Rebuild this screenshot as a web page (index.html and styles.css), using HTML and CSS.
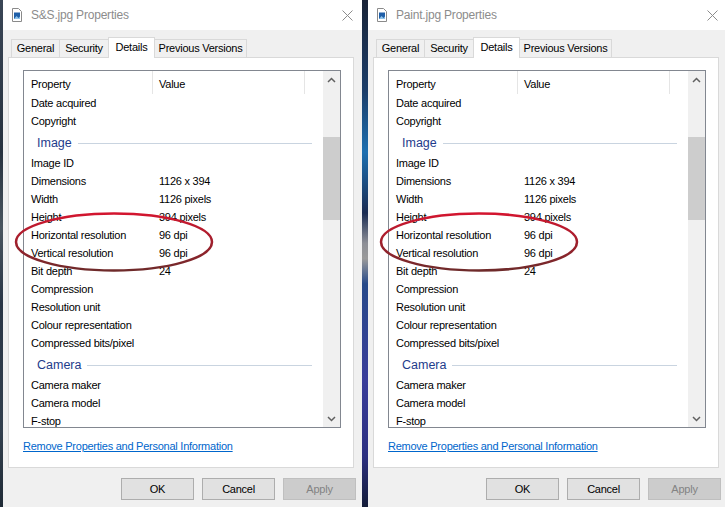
FILE: index.html
```html
<!DOCTYPE html>
<html lang="en">
<head>
    <meta charset="UTF-8">
    <title>Properties</title>
    <link rel="stylesheet" href="styles.css">
</head>
<body>
    <div class="desk desk-edge"></div>

    <div class="dialog">
        <div class="titlebar">
            <svg class="file-icon" width="10" height="14" viewBox="0 0 10 14"><path d="M0.5 0.5h6l3 3v10h-9z" fill="#fff" stroke="#8a8a8a"/><rect x="2" y="4.5" width="6" height="6.5" fill="#1f5fa8"/><path d="M2 11l2.5-3 2 2 1.5-1.5v2.5z" fill="#8fc3ea"/></svg>
            <span class="title">S&amp;S.jpg Properties</span>
            <svg class="close" width="11" height="11" viewBox="0 0 11 11"><path d="M0.5 0.5l10 10M10.5 0.5l-10 10" stroke="#8c8c8c" stroke-width="1"/></svg>
        </div>
        <div class="tabs">
            <span class="tab tab-general">General</span>
            <span class="tab tab-security">Security</span>
            <span class="tab tab-details active">Details</span>
            <span class="tab tab-prev">Previous Versions</span>
        </div>
        <div class="panel">
            <div class="list">
                <div class="list-body">
                    <div class="head"><span class="c-name">Property</span><span class="c-value">Value</span><span class="c-rest"></span></div>
                    <div class="row"><span class="c-name">Date acquired</span></div>
                    <div class="row"><span class="c-name">Copyright</span></div>
                    <div class="group">Image</div>
                    <div class="row"><span class="c-name">Image ID</span></div>
                    <div class="row"><span class="c-name">Dimensions</span><span class="c-value">1126 x 394</span></div>
                    <div class="row"><span class="c-name">Width</span><span class="c-value">1126 pixels</span></div>
                    <div class="row"><span class="c-name">Height</span><span class="c-value">394 pixels</span></div>
                    <div class="row"><span class="c-name">Horizontal resolution</span><span class="c-value">96 dpi</span></div>
                    <div class="row"><span class="c-name">Vertical resolution</span><span class="c-value">96 dpi</span></div>
                    <div class="row"><span class="c-name">Bit depth</span><span class="c-value">24</span></div>
                    <div class="row"><span class="c-name">Compression</span></div>
                    <div class="row"><span class="c-name">Resolution unit</span></div>
                    <div class="row"><span class="c-name">Colour representation</span></div>
                    <div class="row"><span class="c-name">Compressed bits/pixel</span></div>
                    <div class="group">Camera</div>
                    <div class="row"><span class="c-name">Camera maker</span></div>
                    <div class="row"><span class="c-name">Camera model</span></div>
                    <div class="row"><span class="c-name">F-stop</span></div>
                </div>
                <div class="scroll">
                    <div class="sb-btn"><svg width="9" height="6" viewBox="0 0 9 6"><path d="M1 5l3.5-3.5L8 5" fill="none" stroke="#606060" stroke-width="1.5"/></svg></div>
                    <div class="sb-thumb"></div>
                    <div class="sb-btn"><svg width="9" height="6" viewBox="0 0 9 6"><path d="M1 1l3.5 3.5L8 1" fill="none" stroke="#606060" stroke-width="1.5"/></svg></div>
                </div>
            </div>
            <a class="link" href="#">Remove Properties and Personal Information</a>
        </div>
        <div class="buttons">
            <span class="btn">OK</span>
            <span class="btn">Cancel</span>
            <span class="btn btn-disabled">Apply</span>
        </div>
        <svg class="mark" width="204" height="66" viewBox="0 0 204 66">
            <defs><linearGradient id="ink1" x1="0" y1="0" x2="0" y2="1"><stop offset="0" stop-color="#d3152f"/><stop offset="1" stop-color="#6e2a2a"/></linearGradient></defs>
            <ellipse cx="102" cy="33" rx="98" ry="28.5" fill="none" stroke="url(#ink1)" stroke-width="2.5"/>
        </svg>
    </div>

    <div class="desk desk-gap"></div>

    <div class="dialog">
        <div class="titlebar">
            <svg class="file-icon" width="10" height="14" viewBox="0 0 10 14"><path d="M0.5 0.5h6l3 3v10h-9z" fill="#fff" stroke="#8a8a8a"/><rect x="2" y="4.5" width="6" height="6.5" fill="#1f5fa8"/><path d="M2 11l2.5-3 2 2 1.5-1.5v2.5z" fill="#8fc3ea"/></svg>
            <span class="title">Paint.jpg Properties</span>
            <svg class="close" width="11" height="11" viewBox="0 0 11 11"><path d="M0.5 0.5l10 10M10.5 0.5l-10 10" stroke="#8c8c8c" stroke-width="1"/></svg>
        </div>
        <div class="tabs">
            <span class="tab tab-general">General</span>
            <span class="tab tab-security">Security</span>
            <span class="tab tab-details active">Details</span>
            <span class="tab tab-prev">Previous Versions</span>
        </div>
        <div class="panel">
            <div class="list">
                <div class="list-body">
                    <div class="head"><span class="c-name">Property</span><span class="c-value">Value</span><span class="c-rest"></span></div>
                    <div class="row"><span class="c-name">Date acquired</span></div>
                    <div class="row"><span class="c-name">Copyright</span></div>
                    <div class="group">Image</div>
                    <div class="row"><span class="c-name">Image ID</span></div>
                    <div class="row"><span class="c-name">Dimensions</span><span class="c-value">1126 x 394</span></div>
                    <div class="row"><span class="c-name">Width</span><span class="c-value">1126 pixels</span></div>
                    <div class="row"><span class="c-name">Height</span><span class="c-value">394 pixels</span></div>
                    <div class="row"><span class="c-name">Horizontal resolution</span><span class="c-value">96 dpi</span></div>
                    <div class="row"><span class="c-name">Vertical resolution</span><span class="c-value">96 dpi</span></div>
                    <div class="row"><span class="c-name">Bit depth</span><span class="c-value">24</span></div>
                    <div class="row"><span class="c-name">Compression</span></div>
                    <div class="row"><span class="c-name">Resolution unit</span></div>
                    <div class="row"><span class="c-name">Colour representation</span></div>
                    <div class="row"><span class="c-name">Compressed bits/pixel</span></div>
                    <div class="group">Camera</div>
                    <div class="row"><span class="c-name">Camera maker</span></div>
                    <div class="row"><span class="c-name">Camera model</span></div>
                    <div class="row"><span class="c-name">F-stop</span></div>
                </div>
                <div class="scroll">
                    <div class="sb-btn"><svg width="9" height="6" viewBox="0 0 9 6"><path d="M1 5l3.5-3.5L8 5" fill="none" stroke="#606060" stroke-width="1.5"/></svg></div>
                    <div class="sb-thumb"></div>
                    <div class="sb-btn"><svg width="9" height="6" viewBox="0 0 9 6"><path d="M1 1l3.5 3.5L8 1" fill="none" stroke="#606060" stroke-width="1.5"/></svg></div>
                </div>
            </div>
            <a class="link" href="#">Remove Properties and Personal Information</a>
        </div>
        <div class="buttons">
            <span class="btn">OK</span>
            <span class="btn">Cancel</span>
            <span class="btn btn-disabled">Apply</span>
        </div>
        <svg class="mark" width="204" height="66" viewBox="0 0 204 66">
            <defs><linearGradient id="ink2" x1="0" y1="0" x2="0" y2="1"><stop offset="0" stop-color="#d3152f"/><stop offset="1" stop-color="#6e2a2a"/></linearGradient></defs>
            <ellipse cx="102" cy="33" rx="98" ry="28.5" fill="none" stroke="url(#ink2)" stroke-width="2.5"/>
        </svg>
    </div>
</body>
</html>
```

FILE: styles.css
```css
body {
    margin: 0;
    width: 725px;
    height: 507px;
    overflow: hidden;
    display: flex;
    background: #1a2740;
    font-family: "Liberation Sans", Arial, sans-serif;
    font-size: 11px;
    letter-spacing: -0.25px;
    color: #000;
}
.desk {
    flex: none;
    height: 507px;
}
.desk-edge {
    width: 3px;
    background: linear-gradient(#3a4656, #27323f 30%, #4a5660 45%, #2a3646 60%, #33404e 85%, #1f2a36);
}
.desk-gap {
    width: 6px;
    background: linear-gradient(#1a2438, #1c3e6a 18%, #1d6fb0 30%, #1b2c52 42%, #8d8f96 48%, #9a9a9a 51%, #274a8a 56%, #3a3d9a 75%, #2c3080 90%, #141c38);
}
.dialog {
    position: relative;
    flex: none;
    width: 359px;
    height: 507px;
    background: #f0f0f0;
}
.titlebar {
    height: 30px;
    background: #fff;
    display: flex;
    align-items: center;
}
.file-icon {
    margin-left: 9px;
    flex: none;
}
.title {
    flex: 1;
    margin-left: 9px;
    font-size: 12px;
    letter-spacing: -0.2px;
    color: #8c8c8c;
}
.close {
    margin-right: 9px;
    flex: none;
}
.tabs {
    display: flex;
    align-items: flex-end;
    height: 20px;
    margin-top: 7px;
    padding-left: 8px;
    position: relative;
    z-index: 1;
}
.tab {
    box-sizing: border-box;
    height: 18px;
    line-height: 17px;
    text-align: center;
    border: 1px solid #d9d9d9;
    border-bottom: none;
    background: #f0f0f0;
    margin-right: -1px;
}
.tab-general { width: 49px; }
.tab-security { width: 50px; }
.tab-details { width: 47px; }
.tab-prev { width: 93px; }
.tab.active {
    height: 21px;
    line-height: 19px;
    background: #fff;
    margin-bottom: -1px;
}
.panel {
    box-sizing: border-box;
    width: 346px;
    height: 411px;
    margin-left: 5px;
    padding: 12px 0 0 14px;
    border: 1px solid #d9d9d9;
    background: #fff;
}
.list {
    box-sizing: border-box;
    width: 318px;
    height: 358px;
    border: 1px solid #828790;
    display: flex;
    overflow: hidden;
}
.list-body {
    flex: 1;
    overflow: hidden;
}
.head, .row {
    display: flex;
    align-items: center;
}
.head {
    height: 23px;
}
.row {
    height: 18px;
}
.c-name {
    box-sizing: border-box;
    width: 128px;
    padding-left: 7px;
    white-space: nowrap;
}
.c-value {
    padding-left: 7px;
    white-space: nowrap;
}
.head span {
    box-sizing: border-box;
    height: 23px;
    padding-top: 2px;
    line-height: 23px;
}
.head .c-value {
    width: 152px;
    border-left: 1px solid #e5e5e5;
    padding-left: 6px;
}
.head .c-rest {
    flex: 1;
    border-left: 1px solid #e5e5e5;
}
.group {
    box-sizing: border-box;
    height: 24px;
    display: flex;
    align-items: center;
    padding: 2px 0 0 13px;
    font-size: 12.5px;
    letter-spacing: 0;
    color: #1e3c8c;
}
.group::after {
    content: "";
    flex: 1;
    height: 1px;
    margin: 1px 11px 0 6px;
    background: #c9d4e0;
}
.scroll {
    width: 17px;
    flex: none;
    background: #f0f0f0;
    display: flex;
    flex-direction: column;
}
.sb-btn {
    height: 17px;
    display: flex;
    align-items: center;
    justify-content: center;
}
.sb-btn:last-child {
    margin-top: auto;
}
.sb-thumb {
    height: 83px;
    margin-top: 49px;
    background: #cdcdcd;
}
.link {
    display: inline-block;
    margin-top: 12px;
    color: #0066cc;
    text-decoration: underline;
}
.buttons {
    display: flex;
    justify-content: flex-end;
    gap: 8px;
    margin-top: 10px;
    padding-right: 6px;
}
.btn {
    box-sizing: border-box;
    width: 73px;
    height: 22px;
    display: flex;
    align-items: center;
    justify-content: center;
    border: 1px solid #adadad;
    background: #e1e1e1;
}
.btn-disabled {
    border-color: #bfbfbf;
    background: #cccccc;
    color: #838383;
}
.mark {
    position: absolute;
    left: 9px;
    top: 209px;
}
```
